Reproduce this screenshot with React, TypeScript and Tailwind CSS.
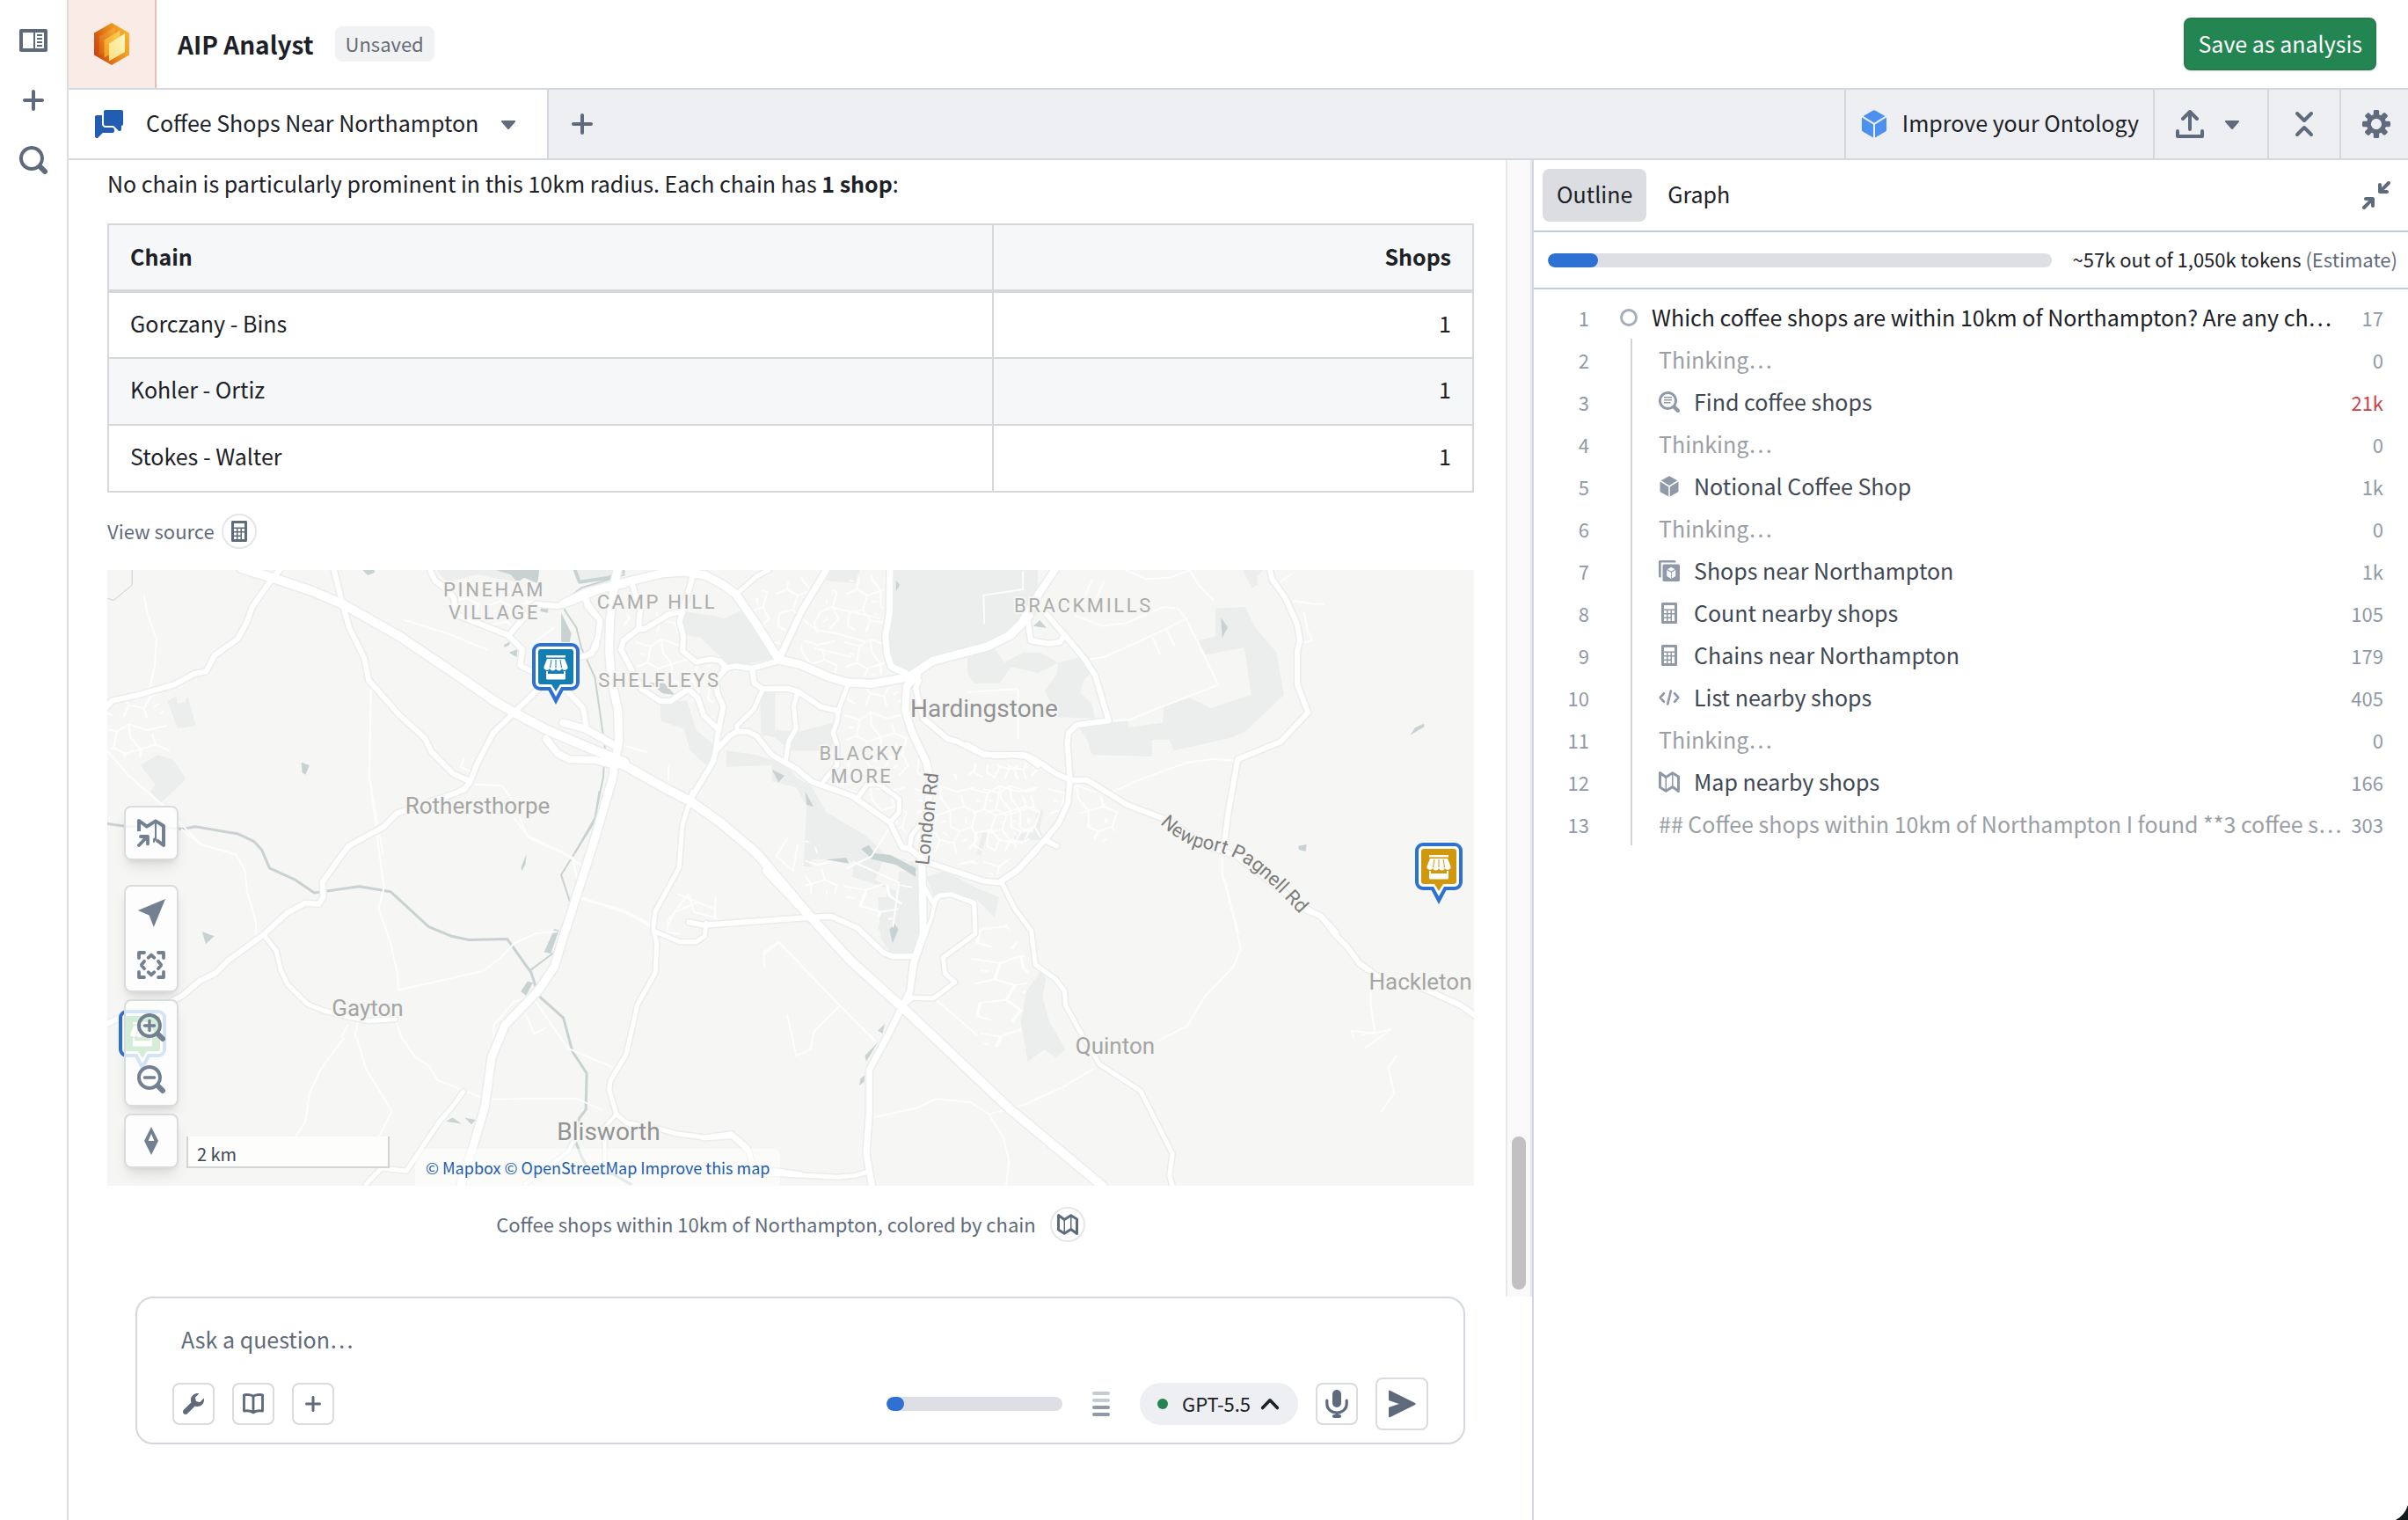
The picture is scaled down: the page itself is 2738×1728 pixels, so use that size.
import React from "react";

/* ---------- icons ---------- */

type IconProps = { className?: string };

function Svg({ className = "size-8", children }: IconProps & { children: React.ReactNode }) {
  return (
    <svg viewBox="0 0 16 16" className={className} fill="currentColor" aria-hidden="true">
      {children}
    </svg>
  );
}

const SEARCH =
  "M15.55 13.43l-2.67-2.68a6.94 6.94 0 001.11-3.76c0-3.87-3.13-7-7-7s-7 3.13-7 7 3.13 7 7 7c1.39 0 2.68-.42 3.76-1.11l2.68 2.67a1.498 1.498 0 102.12-2.12zm-8.56-1.44c-2.76 0-5-2.24-5-5s2.24-5 5-5 5 2.24 5 5-2.24 5-5 5z";

const line = { fill: "none", stroke: "currentColor", strokeLinecap: "round", strokeLinejoin: "round" } as const;

const PanelIcon = ({ className }: IconProps) => (
  <Svg className={className}>
    <path
      fillRule="evenodd"
      d="M1 1.5h14a1 1 0 011 1v11a1 1 0 01-1 1H1a1 1 0 01-1-1v-11a1 1 0 011-1zM2 3.5v9h6v-9zm7 0v9h5v-9z"
    />
    <path d="M10 4.5h3v1h-3zM10 6.5h3v1h-3zM10 8.5h3v1h-3zM10 10.5h3v1h-3z" />
  </Svg>
);
const PlusIcon = ({ className }: IconProps) => (
  <Svg className={className}>
    <path d="M13 7H9V3c0-.55-.45-1-1-1s-1 .45-1 1v4H3c-.55 0-1 .45-1 1s.45 1 1 1h4v4c0 .55.45 1 1 1s1-.45 1-1V9h4c.55 0 1-.45 1-1s-.45-1-1-1z" />
  </Svg>
);
const SearchIcon = ({ className }: IconProps) => (
  <Svg className={className}>
    <path d={SEARCH} />
  </Svg>
);
const ZoomInIcon = ({ className }: IconProps) => (
  <Svg className={className}>
    <path d={SEARCH} />
    <path {...line} strokeWidth="1.7" d="M7 4.2v5.6M4.2 7h5.6" />
  </Svg>
);
const ZoomOutIcon = ({ className }: IconProps) => (
  <Svg className={className}>
    <path d={SEARCH} />
    <path {...line} strokeWidth="1.7" d="M4.2 7h5.6" />
  </Svg>
);
const SearchTextIcon = ({ className }: IconProps) => (
  <Svg className={className}>
    <path d={SEARCH} />
    <path d="M4 4h6v1H4zM4 6h6v1H4zM4 8h5v1H4z" />
  </Svg>
);
const ChatIcon = ({ className }: IconProps) => (
  <Svg className={className}>
    <path d="M6 10c-1.1 0-2-.9-2-2V3H1c-.55 0-1 .45-1 1v11a1.003 1.003 0 001.71.71L4.41 13H10c.55 0 1-.45 1-1v-1.17L10.17 10H6zm9-10H6c-.55 0-1 .45-1 1v7c0 .55.45 1 1 1h4.59l2.7 2.71A1.003 1.003 0 0015 11V9c.55 0 1-.45 1-1V1c0-.55-.45-1-1-1z" />
  </Svg>
);
const CaretIcon = ({ className }: IconProps) => (
  <Svg className={className}>
    <path d="M12 6.5c0-.28-.22-.5-.5-.5h-7a.495.495 0 00-.37.83l3.5 4c.09.1.22.17.37.17s.28-.07.37-.17l3.5-4c.08-.09.13-.2.13-.33z" />
  </Svg>
);
const CubeIcon = ({ className }: IconProps) => (
  <Svg className={className}>
    <path d="M14.194 3.54L8 7.41 1.806 3.54 7.504.283a1 1 0 01.992 0zM14.944 4.25c.036.11.056.227.056.346v6.826a1 1 0 01-.504.868L8.5 15.714V8.277zM1.056 4.25L7.5 8.277v7.437l-5.996-3.426A1 1 0 011 11.42V4.596c0-.119.02-.236.056-.346z" />
  </Svg>
);
const ExportIcon = ({ className }: IconProps) => (
  <Svg className={className}>
    <path {...line} strokeWidth="2" d="M4 5l4-4 4 4M8 1.5V11M1 12v3h14v-3" />
  </Svg>
);
const CollapseIcon = ({ className }: IconProps) => (
  <Svg className={className}>
    <path {...line} strokeWidth="2" d="M4 2l4 4 4-4M4 14l4-4 4 4" />
  </Svg>
);
const CogIcon = ({ className }: IconProps) => (
  <Svg className={className}>
    <path d="M15.19 6.39h-1.85c-.11-.37-.27-.71-.45-1.04l1.36-1.36c.31-.31.31-.82 0-1.13l-1.13-1.13a.803.803 0 00-1.13 0l-1.36 1.36c-.33-.17-.67-.33-1.04-.44V.79c0-.44-.36-.8-.8-.8h-1.6c-.44 0-.8.36-.8.8v1.86c-.39.12-.75.28-1.1.47l-1.3-1.3c-.3-.3-.79-.3-1.09 0L1.82 2.91c-.3.3-.3.79 0 1.09l1.3 1.3c-.2.34-.36.7-.48 1.09H.79c-.44 0-.8.36-.8.8v1.6c0 .44.36.8.8.8h1.85c.11.37.27.71.45 1.04l-1.36 1.36c-.31.31-.31.82 0 1.13l1.13 1.13c.31.31.82.31 1.13 0l1.36-1.36c.33.18.67.33 1.04.44v1.86c0 .44.36.8.8.8h1.6c.44 0 .8-.36.8-.8v-1.86c.39-.12.75-.28 1.1-.47l1.3 1.3c.3.3.79.3 1.09 0l1.09-1.09c.3-.3.3-.79 0-1.09l-1.3-1.3c.19-.35.36-.71.48-1.1h1.85c.44 0 .8-.36.8-.8v-1.6a.816.816 0 00-.81-.79zm-7.2 4.6c-1.66 0-3-1.34-3-3s1.34-3 3-3 3 1.34 3 3-1.34 3-3 3z" />
  </Svg>
);
const MinimizeIcon = ({ className }: IconProps) => (
  <Svg className={className}>
    <path d="M15.99.99c0-.55-.45-1-1-1-.28 0-.53.11-.71.29l-3.29 3.29V1.99c0-.55-.45-1-1-1s-1 .45-1 1v4c0 .55.45 1 1 1h4c.55 0 1-.45 1-1s-.45-1-1-1h-1.59L15.7 1.7c.18-.18.29-.43.29-.71zM6 9H2c-.55 0-1 .45-1 1s.45 1 1 1h1.59L.29 14.28c-.18.18-.29.43-.29.71a1.003 1.003 0 001.71.71L5 12.41V14c0 .55.45 1 1 1s1-.45 1-1v-4c0-.55-.45-1-1-1z" />
  </Svg>
);
const CalculatorIcon = ({ className }: IconProps) => (
  <Svg className={className}>
    <path
      fillRule="evenodd"
      d="M3 0h10c.55 0 1 .45 1 1v14c0 .55-.45 1-1 1H3c-.55 0-1-.45-1-1V1c0-.55.45-1 1-1zm1 2v3h8V2zM4 6v2h2V6zm3 0v2h2V6zm3 0v2h2V6zM4 9v2h2V9zm3 0v2h2V9zm3 0v5h2V9zm-6 3v2h2v-2zm3 0v2h2v-2z"
    />
  </Svg>
);
const MapIcon = ({ className }: IconProps) => (
  <Svg className={className}>
    <path {...line} strokeWidth="2" d="M1 1l4.5 3.3L10.5 1.2 15 4v11l-4.5-3.3-5 3.1L1 12z" />
    <path {...line} strokeWidth="1" d="M5.5 4.5v10M10.5 1.5v10" />
  </Svg>
);
const MapResetIcon = ({ className }: IconProps) => (
  <Svg className={className}>
    <path {...line} strokeLinecap="butt" strokeWidth="2" d="M1 7V1l4.5 3.3L10.5 1.2 15 4v11l-4-3" />
    <path {...line} strokeWidth="1" d="M10.5 1.5V12M9.5 13v-1.5l1-.5" />
    <path {...line} strokeWidth="1.9" d="M1 15l4.6-4.8M2 10h4v4.2" />
  </Svg>
);
const GroupIcon = ({ className }: IconProps) => (
  <Svg className={className}>
    <path d="M0 1a1 1 0 011-1h11a1 1 0 011 1v.7H1.8V13H1a1 1 0 01-1-1z" />
    <path
      fillRule="evenodd"
      d="M4 3h11a1 1 0 011 1v11a1 1 0 01-1 1H4a1 1 0 01-1-1V4a1 1 0 011-1zm5.5 2.200L6.200 7v5l3.300 2 3.300-2V7z"
    />
    <path d="M9.300 9.200L6.200 7.400v-.9l3.300 1.900 3.300-1.900v.9L9.900 9.200v4.400h-.6z" />
  </Svg>
);
const CodeIcon = ({ className }: IconProps) => (
  <Svg className={className}>
    <path {...line} strokeWidth="1.8" d="M4 4.8L1.2 8 4 11.2M12 4.8L14.8 8 12 11.2M9.2 3L6.8 13" />
  </Svg>
);
const WrenchIcon = ({ className }: IconProps) => (
  <Svg className={className}>
    <path d="M15.83 3.7l-3.06 3.05-2.84-.7-.7-2.83L12.29.17a5.004 5.004 0 00-4.83 1.29 4.967 4.967 0 00-1.12 5.36L.58 12.58c-.36.36-.58.86-.58 1.41 0 1.1.9 2 2 2 .55 0 1.05-.22 1.41-.59l5.77-5.77c1.79.69 3.91.35 5.35-1.1a4.998 4.998 0 001.3-4.83z" />
  </Svg>
);
const ManualIcon = ({ className }: IconProps) => (
  <Svg className={className}>
    <path {...line} strokeWidth="1.9" d="M8 2.4C6.6 1 3 .8 1 1.2v12.2c2.2-.4 5.4-.2 7 1.3 1.6-1.5 4.8-1.7 7-1.3V1.2c-2-.4-5.6-.2-7 1.2zM8 2.6v12" />
  </Svg>
);
const ChevronUpIcon = ({ className }: IconProps) => (
  <Svg className={className}>
    <path {...line} strokeWidth="2.4" d="M2.4 11L8 5.2l5.6 5.8" />
  </Svg>
);
const MicIcon = ({ className }: IconProps) => (
  <Svg className={className}>
    <rect x="5.5" y="0" width="5" height="10" rx="2.5" />
    <path {...line} strokeWidth="1.6" d="M2.400 6v2c0 2.900 2.400 5 5.600 5s5.600-2.100 5.600-5V6M8 13v2" />
    <rect x="5.5" y="14" width="5" height="2" rx="1" />
  </Svg>
);
const SendIcon = ({ className }: IconProps) => (
  <Svg className={className}>
    <path strokeWidth="1" stroke="currentColor" strokeLinejoin="round" d="M1 .8L15.3 8 1 15.2v-4.800L8 8 1 5.6z" />
  </Svg>
);
const LocateIcon = ({ className }: IconProps) => (
  <Svg className={className}>
    <path d="M16 0L.4 6.5l6.4 2.800L9.4 16z" />
  </Svg>
);
const FitIcon = ({ className }: IconProps) => (
  <Svg className={className}>
    <path {...line} strokeWidth="1.9" d="M1 4V1h3M12 1h3v3M15 12v3h-3M4 15H1v-3M6.3 3.9L8 2.3l1.7 1.6M6.3 12.1L8 13.7l1.7-1.6M4 5.900L2.4 8 4 10.1M12 5.9L13.6 8 12 10.1" />
  </Svg>
);
const CompassIcon = ({ className }: IconProps) => (
  <Svg className={className}>
    <path fillRule="evenodd" d="M8 0l4 8-4 8-4-8zM8 4L6.3 8h3.4z" />
  </Svg>
);

const Logo = () => (
  <svg viewBox="0 0 40 48" className="h-12 w-10" aria-hidden="true">
    <defs>
      <linearGradient id="hex" x1="0" y1="0.7" x2="1" y2="0.3">
        <stop offset="0" stopColor="#c9430c" />
        <stop offset="0.55" stopColor="#e88a1c" />
        <stop offset="1" stopColor="#f6b531" />
      </linearGradient>
      <linearGradient id="l1" x1="0" y1="1" x2="1" y2="0">
        <stop offset="0" stopColor="#d9600f" />
        <stop offset="1" stopColor="#f6ae35" />
      </linearGradient>
      <linearGradient id="l2" x1="0" y1="1" x2="1" y2="0">
        <stop offset="0" stopColor="#f39a22" />
        <stop offset="1" stopColor="#fcd254" />
      </linearGradient>
      <linearGradient id="l3" x1="0" y1="1" x2="1" y2="0">
        <stop offset="0" stopColor="#fbdf7c" />
        <stop offset="1" stopColor="#fef6c4" />
      </linearGradient>
    </defs>
    <path d="M20 0l20 11.5v25L20 48 0 36.5v-25z" fill="url(#hex)" />
    <path d="M6 15.5L23.5 5v22L6 37z" fill="url(#l1)" />
    <path d="M11.5 19.5L29.5 8.5V29l-18 10.5z" fill="url(#l2)" />
    <path d="M17 23.5L35 12v21L17 43.5z" fill="url(#l3)" />
  </svg>
);

/* ---------- map ---------- */

/* Each sheet keeps its own survey grid; the transform places it in map units. */
const SHEETS = {
  nw: "translate(110 570) scale(0.3827 0.3333)",
  sw: "translate(110 900) scale(0.5102 0.3317)",
  ne: "translate(1100 640) scale(0.3827 0.3333)",
  mid: "translate(640 640) scale(0.3444 0.3333)",
  se: "translate(640 1000) scale(0.6633 0.3333)",
} as const;
type Sheet = keyof typeof SHEETS;
type Shape = [Sheet, string, number?];

const PARKS: Shape[] = [
  ["mid", "M395,165L500,180L530,190L605,155L705,325L560,355L500,300L455,255L398,245Z"],
  ["mid", "M1095,24L1568,24L1568,170L1480,240L1400,280L1220,330L1160,370L1085,350L1070,300L1085,170Z"],
  ["mid", "M320,470L410,470L440,570L510,630L480,695L420,640L400,565L325,540Z"],
  ["mid", "M540,640L640,655L735,690L775,735L820,760L870,850L1000,930L1080,1010L1170,1020L1175,1060L1130,1010L1060,1010L1030,1080L1100,1120L1080,1260L1040,1250L1075,1110L955,1070L960,1020L880,1010L820,1010L820,1035L795,1035L805,830L770,765L690,745L690,690L540,695Z"],
  ["mid", "M1110,1050L1180,1060L1180,1260L1090,1260Z"],
  ["mid", "M1200,1070L1260,1050L1370,1110L1440,1140L1425,1210L1370,1150L1300,1130L1225,1140Z"],
  ["mid", "M650,430L700,440L700,570L780,575L890,545L890,640L750,640L700,595L655,585Z"],
  ["mid", "M885,24L980,24L965,70L870,60Z"],
  ["ne", "M0,375L0,310L80,290L110,340L165,305L215,305L270,340L210,375L130,355L95,410L20,410Z"],
  ["ne", "M270,340L340,320L370,370L345,400L335,440L370,480L378,530L265,525L230,435L265,380Z"],
  ["ne", "M330,560L475,535L480,560L580,545L585,490L660,460L725,495L843,450L823,288L708,313L687,265L737,250L737,155L825,150L855,220L918,305L940,450L825,575L780,597L613,640L600,603L548,603L548,660L370,655L355,600Z"],
  ["ne", "M818,24L880,24L860,45L862,75L845,85Z"],
  ["ne", "M140,920L195,920L205,855L225,840L215,910L230,945L140,945Z"],
  ["ne", "M45,920L60,920L40,1000L28,990Z"],
  ["se", "M820,310L828,340L822,400L835,490L862,580L845,605L825,580L797,620L785,480L795,380Z"],
  ["se", "M540,60L612,60L612,180L600,255L562,255L545,200Z"],
  ["nw", "M210,680L235,665L240,690L262,685L270,665L295,765L240,775Z"],
  ["nw", "M130,900L180,865L225,880L265,945L190,1030L160,990L175,965Z"],
  ["nw", "M1010,234L1220,234L1250,275L1130,250L1040,275Z"],
  ["nw", "M1420,234L1535,234L1540,260L1440,270Z"],
];

const WATER: Shape[] = [
  ["nw", "M1185,234L1315,234L1310,280L1270,260L1250,275L1230,250Z"],
  ["nw", "M790,234L825,234L825,243L805,252Z"],
  ["nw", "M608,890L632,900L620,932L610,925Z"],
  ["nw", "M1210,490L1232,475L1225,490L1212,498Z"],
  ["nw", "M1225,515L1250,505L1248,532Z"],
  ["nw", "M1380,380L1410,450L1405,480L1380,480Z"],
  ["nw", "M1320,360L1342,365L1340,380L1318,375Z"],
  ["sw", "M235,480L262,495L243,522Z"],
  ["sw", "M958,213L955,250L947,272L946,258Z"],
  ["sw", "M1020,470L1030,475L1012,555L997,550Z"],
  ["sw", "M960,650L972,655L957,698L945,685Z"],
  ["sw", "M793,1117L813,1138L778,1130Z"],
  ["sw", "M820,1117L845,1125L835,1140Z"],
  ["mid", "M285,408L335,410L370,450L330,445Z"],
  ["mid", "M690,705L732,725L712,748Z"],
  ["mid", "M800,780L828,832L805,825Z"],
  ["mid", "M985,975L1010,962L1030,990L1080,995L1165,1040L1165,1070L1100,1030L1020,1010Z"],
  ["mid", "M868,1012L935,1005L945,1025Z"],
  ["mid", "M1100,60L1112,75L1100,97Z"],
  ["se", "M568,148L575,170L565,218L560,170Z"],
  ["se", "M552,492L548,525L540,515Z"],
  ["se", "M540,555L520,620L518,600Z"],
  ["se", "M518,665L516,690L508,703L510,680Z"],
  ["ne", "M753,187L774,220L757,255Z"],
  ["ne", "M1315,588L1330,562L1355,548L1358,558Z"],
  ["ne", "M983,965L1008,960L1005,983L985,978Z"],
  ["ne", "M196,215L215,195L235,222Z"],
];

const STREAMS: Shape[] = [
  ["sw", "M24,110L70,120L130,118L190,128L220,120L315,145L350,170L368,200L385,262L440,300L485,347L585,325L655,343L740,463L790,495L830,508L915,505L968,620L985,700L1040,775L1060,890L1092,965L1090,1090L1075,1120L1065,1190L1080,1250L1100,1305L1150,1310L1190,1345", 3],
  ["sw", "M1120,0L1110,100L1035,285L1055,380L1020,550L968,610", 2],
  ["nw", "M1568,250L1440,295L1395,335L1390,370L1425,430L1440,500L1480,600L1510,840L1505,940L1480,1080L1420,1200", 2],
  ["nw", "M105,234L105,285L50,338L31,330", 1],
  ["mid", "M40,24L55,65L150,50L200,30", 4],
];

const BLOCKS: Shape[] = [
  ["mid", "M940,430L1120,420L1200,700L1180,960L1080,880L980,790L860,740L900,690Z"],
  ["mid", "M1220,740L1400,690L1560,680L1560,900L1430,1070L1220,1000Z"],
  ["mid", "M200,170L380,170L390,320L500,350L500,540L380,430L250,420L200,280Z"],
  ["mid", "M560,120L850,30L720,300L620,180Z"],
  ["mid", "M900,70L1060,30L1060,380L940,390L760,330Z"],
  ["mid", "M800,940L940,1060L930,1130L800,1130Z"],
  ["nw", "M31,700L180,650L235,850L100,880L40,850Z"],
  ["nw", "M1070,320L1300,340L1220,440L1070,385Z"],
  ["se", "M720,100L760,150L800,290L780,590L720,560L700,400L680,350Z"],
  ["se", "M480,10L600,20L560,150L480,60Z"],
  ["ne", "M0,680L290,700L290,860L230,930L0,1040Z"],
  ["ne", "M310,745L480,830L400,990L340,870Z"],
];

const LANES: Shape[] = [
  ["nw", "M140,320L150,380L178,470L172,560L155,650M815,600L810,940L850,1200M915,405L1040,450L1160,505M1125,965L1205,970L1230,1010L1280,1140L1390,1200M31,850L90,930L200,1040L310,1170L400,1200M1360,430L1300,480M1090,880L1080,905L1110,920"],
  ["sw", "M190,130L230,180L310,215L330,270L335,340L355,450L355,500M612,0L640,330L628,400L655,520L670,620L672,680L860,615L900,570L930,520L980,485L1025,480M930,90L965,160L1060,225L1080,365L1180,410L1240,460M665,780L680,845L710,910L740,940L760,990L870,1055L960,1052L1070,1052L1125,1090M550,845L500,950L475,1030L465,1130L440,1190M580,845L600,950L658,1095L630,1180M885,850L885,800L930,720L970,700L1050,880L1150,945M1490,600L1485,550L1520,515L1568,590M545,840L560,800M575,840L582,790M955,760L975,830L1000,810"],
  ["se", "M345,295L345,255L370,215L475,430L535,550M475,430L430,520L425,580L400,600L385,465M535,810L605,780L640,748L700,760L730,800L755,880L765,960L760,1040M730,800L790,768L860,705L910,645M1135,0L1162,235L1150,295L1100,400L1070,500L1020,550M1385,345L1385,430L1392,520L1370,530M1355,535L1352,515L1390,525L1420,510L1375,575M1430,600L1415,640L1425,730L1403,790M640,410L710,530M30,65L110,110L155,160M180,140L215,50L225,110L260,130L262,60M180,145L178,180L200,185"],
  ["ne", "M430,782L510,740L655,680L730,668L800,675M365,328L410,320L590,225L650,190L745,415L590,485L480,535L425,540M650,190L625,155L585,150L560,160L470,205L400,215L320,180M470,24L530,55L600,50L660,24L690,80L730,125M757,1000L757,1060L780,1160L805,1260M50,205L48,110L165,90L165,30M0,440L150,430L150,600M590,225L615,280M550,255L572,310M370,60L350,110M405,65L385,115M910,80L960,40M970,130L1030,140L1060,140M1000,170L1010,230L1025,265L1000,270"],
  ["mid", "M790,190L840,230L905,240L1000,270M830,290L950,320M880,150L1010,180L1045,190M740,940L705,1000L760,1050L775,960M380,1130L430,1150L500,1180L505,1215M440,1160L370,1190L345,1240M940,1040L1020,1000L1080,900M1090,1240L1110,1090L960,1020M0,990L60,1030M60,1140L210,1195L290,1240M350,690L348,740M210,625L275,645"],
];

const ROADS: Shape[] = [
  ["nw", "M545,232L520,265L462,360L445,415L418,470L350,525L325,580L290,588L230,625L125,660L45,680L31,700", 5],
  ["nw", "M705,234L733,362L750,430L795,535L808,610L900,730L975,808L995,855L1060,930L1110,955", 5],
  ["nw", "M1330,620L1238,722L1178,790L1130,895L1110,955L1090,985", 5],
  ["nw", "M990,234L1005,270L1040,300L1062,330L1065,385L1220,455L1265,505L1258,560L1330,600L1400,650L1445,705L1455,775L1550,840", 5],
  ["nw", "M1225,455L1305,350L1370,357L1420,340L1500,300L1568,285", 5],
  ["nw", "M1450,320L1460,350L1495,405L1490,460L1470,520L1440,530", 5],
  ["nw", "M1385,755L1450,775L1550,840M1335,810L1370,860L1405,880L1480,882L1540,900", 7],
  ["sw", "M820,-10L800,5L668,75L640,120L562,185L540,230L503,310L505,360L495,385L465,382L425,415L372,490L292,580L265,622L230,648L190,700L140,740L45,780L24,795", 5],
  ["sw", "M372,490L400,545L410,610L425,660L470,728L505,750L570,775L605,785L665,780", 4],
  ["sw", "M817,1028L790,1085L765,1128L690,1300L635,1290L600,1345", 4],
  ["sw", "M1328,0L1305,115L1298,260L1245,410L1240,470L1248,520L1245,620L1205,730L1180,900L1145,990L1142,1020L1158,1105L1180,1135L1260,1158L1290,1172L1355,1185L1415,1172L1450,1220L1465,1290L1568,1310", 4],
  ["sw", "M1245,480L1300,515L1335,515L1355,495L1358,450", 4],
  ["sw", "M1158,1105L1132,1150L1132,1260M1065,1190L1050,1235L955,1345", 3],
  ["mid", "M0,140L80,100L190,70L330,35L400,30L470,42L530,75L570,105L640,210L710,325", 8],
  ["mid", "M870,24L790,160L715,325", 6],
  ["mid", "M1080,24L1078,170L1065,250L1070,310L1085,355L1130,375", 6],
  ["mid", "M530,360L570,352L625,360L710,335M625,360L632,410L660,430L740,428L775,438L850,490L910,505", 5],
  ["mid", "M430,40L400,150L385,200L398,250L395,300L440,338L490,328L520,335L540,358L505,400L510,445L530,490L512,580L505,640L495,680L425,800", 5],
  ["mid", "M230,75L255,160L250,225L270,225L350,175L395,165M250,225L200,265L192,295L260,430L320,470L355,472L415,430L445,460L465,520L515,570", 5],
  ["mid", "M70,110L80,150L125,200L110,290L75,318", 4],
  ["mid", "M505,640L550,590L575,575L610,575L640,590L690,655L775,705L820,745L955,795L1080,885L1120,970L1145,975L1200,1020L1390,1085L1440,1090L1500,1050L1568,975", 5],
  ["mid", "M660,430L630,500L575,555L575,575M775,440L762,490L770,565L745,610L735,680M940,420L910,500L905,540L892,580L905,620L905,690L860,745M975,800L1005,755L1045,755L1110,805L1110,850L1080,885M1145,975L1150,930L1180,890", 4],
  ["mid", "M680,24L640,45L580,100", 4],
  ["mid", "M1175,400L1165,430L1190,530L1270,600L1300,608L1390,655L1490,655L1530,660L1568,690", 5],
  ["ne", "M0,620L45,650L85,658L140,655L170,655L200,670L265,720L305,740L355,740L475,825L600,880L700,960L800,1000L1000,1175L1050,1205L1095,1260", 5],
  ["ne", "M305,740L297,620L300,580L325,552L420,538L380,385L350,330L288,245L235,175M288,245L275,270L240,275L188,265L180,200M305,740L298,820L270,890L230,945L150,1045L100,1085M230,945L265,965", 5],
  ["ne", "M898,20L905,55L945,120L980,210L988,265L980,300L980,415L1012,510L930,610L803,670L775,850L763,960", 5],
  ["se", "M751,5L775,100L803,175L810,290L845,340L860,380L862,430L890,530L920,630L990,720L1045,935L1040,1010L1045,1045", 4],
  ["se", "M1270,100L1300,125L1325,190L1345,230L1365,285L1400,335L1480,375L1540,430L1568,470", 5],
  ["se", "M618,20L635,80L645,55L665,50L705,80L707,185L652,265L655,320L672,350L635,405L600,402L580,432", 4],
  ["se", "M640,60L632,130L605,280L595,400", 3],
  ["se", "M216,145L240,155L426,128L460,125L505,165L550,250L565,262L600,262", 5],
  ["se", "M240,882L290,875L320,930L325,1000L430,1010L470,1015L500,1010L525,995", 4],
  ["mid", "M180,24L170,75L155,200L153,300L160,400L182,500L185,610L170,690L165,730L100,960L10,1250", 8],
  ["sw", "M1045,472L1020,600L985,680L910,800L880,910L865,1080L838,1220L812,1345", 8],
  ["mid", "M710,330L780,345L880,390L940,408L1020,412L1140,390L1220,335L1400,285L1480,245L1540,180", 8],
  ["ne", "M0,305L60,285L120,250L160,205L215,100L262,20", 7],
  ["mid", "M1170,385L1135,420L1130,500L1150,570L1200,680L1212,740L1200,900L1185,1000L1190,1260", 7],
  ["se", "M616,60L618,180L600,290L595,380L580,440L560,520L525,650L525,800L520,935L530,1045", 6],
  ["nw", "M430,228L525,262L640,306L730,350L900,460L1080,600L1180,680L1240,720L1330,775L1440,830L1568,890", 9],
  ["mid", "M140,665L203,690L340,770L420,812L520,885L640,990L820,1210", 9],
  ["se", "M350,-30L426,130L495,280L580,432L765,780L925,1045", 9],
];

function Shapes({ items, fill }: { items: Shape[]; fill: string }) {
  return (
    <g fill={fill}>
      {items.map(([sheet, d], i) => (
        <path key={i} d={d} transform={SHEETS[sheet]} />
      ))}
    </g>
  );
}

function Lines({ items, stroke, extra = 0 }: { items: Shape[]; stroke: string; extra?: number }) {
  return (
    <g fill="none" stroke={stroke} strokeLinecap="round" strokeLinejoin="round">
      {items.map(([sheet, d, w = 2], i) => (
        <path key={i} d={d} transform={SHEETS[sheet]} strokeWidth={w + extra} vectorEffect="non-scaling-stroke" />
      ))}
    </g>
  );
}

function Marker({ x, y, color }: { x: number; y: number; color: string }) {
  return (
    <g transform={`translate(${x} ${y})`}>
      <path
        d="M9 0h36a9 9 0 019 9v36a9 9 0 01-9 9h-9.5L27 70l-8.5-16H9a9 9 0 01-9-9V9a9 9 0 019-9z"
        fill="#2d72d2"
      />
      <path d="M9 4h36a5 5 0 015 5v36a5 5 0 01-5 5H33l-6 11-6-11H9a5 5 0 01-5-5V9a5 5 0 015-5z" fill="#fff" />
      <path d="M10 7h34a3 3 0 013 3v34a3 3 0 01-3 3H32l-5 8-5-8H10a3 3 0 01-3-3V10a3 3 0 013-3z" fill={color} />
      <g fill="#fff">
        <path d="M16 14h22v2.5H16zM17 18h20l3.500 9a3.3 3.3 0 01-6.6 1 3.3 3.3 0 01-6.900 0 3.3 3.3 0 01-6.900 0 3.3 3.3 0 01-6.6-1z" />
        <path d="M16 32h2v5h18v-5h2v8a1.5 1.5 0 01-1.5 1.5h-19A1.5 1.5 0 0116 40z" />
        <path d="M17 35h20v6H17z" />
      </g>
      <path d="M22 19l-1.5 9M27 19v9M32 19l1.5 9" stroke={color} strokeWidth="1" />
    </g>
  );
}

const SUBURBS: [number, number, string][] = [
  [562, 678, "PINEHAM"],
  [562, 704, "VILLAGE"],
  [747, 692, "CAMP HILL"],
  [750, 781, "SHELFLEYS"],
  [1232, 696, "BRACKMILLS"],
  [980, 864, "BLACKY"],
  [980, 890, "MORE"],
];
const VILLAGES: [number, number, string][] = [
  [543, 925, "Rothersthorpe"],
  [418, 1155, "Gayton"],
  [1268, 1198, "Quinton"],
  [1615, 1125, "Hackleton"],
];
const TOWNS: [number, number, string][] = [
  [1119, 815, "Hardingstone"],
  [692, 1296, "Blisworth"],
];

function Terrain() {
  return (
    <svg
      viewBox="122 648 1554 700"
      preserveAspectRatio="xMidYMid slice"
      className="h-full w-full bg-[#f6f6f4] font-[Roboto,sans-serif]"
      role="img"
      aria-label="Map of coffee shops around Northampton"
    >
      <defs>
        <pattern id="streets" width="230" height="250" patternUnits="userSpaceOnUse">
          <path
            d="M10 20L60 35L95 10L150 30L210 15M60 35L50 90L15 105M50 90L85 110L130 95M95 10L100 55L130 95L175 80L215 100M175 80L165 45M215 100L200 150L160 165L130 150L130 95M85 110L70 160L25 170M70 160L95 195L140 205L160 165M95 195L80 235M140 205L150 240M200 150L220 190L190 225M25 170L20 215L45 230M25 60L40 62M115 130L98 135M180 118L182 140M105 170L120 178M185 190L170 200"
            fill="none"
            stroke="#ffffff"
            strokeWidth="5"
            strokeLinejoin="round"
          />
        </pattern>
        <path id="london" d="M1056 984L1067 880" />
        <path id="newport" d="M1319 936Q1338 956 1364 964Q1398 968 1425 988Q1452 1010 1484 1046" />
      </defs>
      <Shapes items={PARKS} fill="#ebeeed" />
      <Shapes items={BLOCKS} fill="url(#streets)" />
      <Shapes items={WATER} fill="#c9d2d3" />
      <Lines items={STREAMS} stroke="#c9d2d3" />
      <Lines items={LANES} stroke="#fdfdfd" />
      <Lines items={ROADS} stroke="#e9edeb" extra={4} />
      <Lines items={ROADS} stroke="#ffffff" extra={1} />
      <g stroke="#f6f6f4" strokeWidth="4" strokeLinejoin="round" textAnchor="middle" className="[paint-order:stroke]">
        <g fill="#adadad" className="text-[22px] tracking-[0.12em]">
          {SUBURBS.map(([x, y, t]) => (
            <text key={t} x={x} y={y}>
              {t}
            </text>
          ))}
        </g>
        <g fill="#a5a5a5" className="text-[26px]">
          {VILLAGES.map(([x, y, t]) => (
            <text key={t} x={x} y={y}>
              {t}
            </text>
          ))}
        </g>
        <g fill="#939393" className="text-[28px]">
          {TOWNS.map(([x, y, t]) => (
            <text key={t} x={x} y={y}>
              {t}
            </text>
          ))}
        </g>
        <g fill="#7d7d7d" textAnchor="start" className="text-[22px]">
          <text>
            <textPath href="#london">London Rd</textPath>
          </text>
          <text>
            <textPath href="#newport">Newport Pagnell Rd</textPath>
          </text>
        </g>
      </g>
      <Marker x={605} y={731} color="#147eb3" />
      <Marker x={1609} y={958} color="#d1980b" />
      <Marker x={135} y={1148} color="#29a634" />
    </svg>
  );
}

const controlGroup =
  "flex w-[62px] flex-col overflow-hidden rounded-lg border-2 border-[#d9dbdc] bg-white/80 text-[#738091] shadow-lg";
const controlButton = "flex h-[58px] items-center justify-center";

function MapView() {
  return (
    <div className="relative mt-6 h-[700px] overflow-hidden">
      <Terrain />
      <div className="absolute bottom-5 left-[19px] flex flex-col gap-2">
        <div className={controlGroup + " mb-5"}>
          <button className={controlButton} aria-label="Reset map">
            <MapResetIcon />
          </button>
        </div>
        <div className={controlGroup}>
          <button className="flex h-[60px] items-center justify-center" aria-label="Locate">
            <LocateIcon />
          </button>
          <button className={controlButton} aria-label="Zoom to fit">
            <FitIcon />
          </button>
        </div>
        <div className={controlGroup}>
          <button className="flex h-[60px] items-center justify-center" aria-label="Zoom in">
            <ZoomInIcon />
          </button>
          <button className={controlButton} aria-label="Zoom out">
            <ZoomOutIcon />
          </button>
        </div>
        <div className={controlGroup}>
          <button className={controlButton} aria-label="Reset north">
            <CompassIcon />
          </button>
        </div>
      </div>
      <div className="absolute bottom-5 left-[90px] flex h-9 w-[231px] items-end border-2 border-t-0 border-[#d3d4d5] bg-white/75 px-2.5 text-[20px] leading-7 text-[#404854]">
        2 km
      </div>
      <div className="absolute bottom-0 left-[350px] flex h-[42px] items-center gap-1 rounded-t-lg bg-white/50 px-3 text-[18px] whitespace-nowrap text-[#215db0]">
        <a href="#mapbox">© Mapbox</a>
        <a href="#osm">© OpenStreetMap</a>
        <a href="#improve">Improve this map</a>
      </div>
    </div>
  );
}

/* ---------- conversation ---------- */

const CHAINS = [
  { name: "Gorczany - Bins", shops: 1 },
  { name: "Kohler - Ortiz", shops: 1 },
  { name: "Stokes - Walter", shops: 1 },
];

const sourceButton =
  "flex size-10 items-center justify-center rounded-full border-2 border-[#e5e6e8] text-[#5f6b7c]";
const squareButton =
  "flex size-12 items-center justify-center rounded-lg border-2 border-[#d9dbe0] text-[#5f6b7c]";

function Answer() {
  return (
    <div className="min-w-0 flex-1 pr-9 pl-11">
      <p className="pt-1.5 pb-6.5 text-[25px] leading-10">
        No chain is particularly prominent in this 10km radius. Each chain has <b>1 shop</b>:
      </p>
      <table className="w-full table-fixed border-collapse border-2 border-[#d5d7da] text-[25px]">
        <thead>
          <tr className="h-[76px] border-b-4 border-[#d5d7da] bg-[#f6f7f9]">
            <th className="w-[64.8%] border-r-2 border-[#d5d7da] px-6 pb-0.5 text-left font-bold">Chain</th>
            <th className="px-6 pb-0.5 text-right font-bold">Shops</th>
          </tr>
        </thead>
        <tbody>
          {CHAINS.map((c) => (
            <tr key={c.name} className="h-[76px] border-t-2 border-[#d5d7da] even:bg-[#f6f7f9]">
              <td className="border-r-2 border-[#d5d7da] px-6 pb-1">{c.name}</td>
              <td className="px-6 pb-1 text-right">{c.shops}</td>
            </tr>
          ))}
        </tbody>
      </table>
      <div className="mt-6 flex h-10 items-center gap-2 text-[22px] text-[#5f6b7c]">
        <span className="pb-0.5">View source</span>
        <button className={sourceButton} aria-label="View source calculation">
          <CalculatorIcon className="size-6" />
        </button>
      </div>
      <MapView />
      <div className="mt-6 flex h-10 items-center justify-center gap-4 text-[22px] text-[#5f6b7c]">
        <span className="pb-0.5">Coffee shops within 10km of Northampton, colored by chain</span>
        <button className={sourceButton} aria-label="View map source">
          <MapIcon className="size-6" />
        </button>
      </div>
    </div>
  );
}

function Composer() {
  return (
    <div className="px-[76px] pb-[86px]">
      <form className="flex h-[168px] flex-col justify-between rounded-[20px] border-2 border-[#d3d8de] pt-6 pr-10 pb-3.5 pl-10">
        <input
          aria-label="Ask a question"
          placeholder="Ask a question…"
          className="h-11 w-full bg-transparent px-2.5 text-[25px] outline-none placeholder:text-[#5f6b7c]"
        />
        <div className="flex items-center gap-5">
          <button type="button" className={squareButton} aria-label="Tools">
            <WrenchIcon className="size-6" />
          </button>
          <button type="button" className={squareButton} aria-label="Documentation">
            <ManualIcon className="size-6" />
          </button>
          <button type="button" className={squareButton} aria-label="Add">
            <PlusIcon className="size-6" />
          </button>
          <div className="ml-auto h-4 w-[200px] overflow-hidden rounded-full bg-[#dedfe4]">
            <div className="h-4 w-5 rounded-full bg-[#2d72d2]" />
          </div>
          <div className="mr-3.5 ml-3.5 flex w-5 flex-col gap-1">
            <span className="h-1 rounded-full bg-[#c5cbd3]" />
            <span className="h-1 rounded-full bg-[#c5cbd3]" />
            <span className="h-1 rounded-full bg-[#8f99a8]" />
            <span className="h-1 rounded-full bg-[#8f99a8]" />
          </div>
          <button
            type="button"
            aria-haspopup="menu"
            className="flex h-12 w-[180px] items-center rounded-full bg-[#eeeff3] px-5 text-[22px]"
          >
            <span className="size-3 rounded-full bg-[#238551]" />
            <span className="ml-4 pb-0.5">GPT-5.5</span>
            <ChevronUpIcon className="ml-auto size-6" />
          </button>
          <button type="button" className={squareButton} aria-label="Dictate">
            <MicIcon />
          </button>
          <button
            type="submit"
            aria-label="Send"
            className="flex size-[60px] items-center justify-center rounded-lg border-2 border-[#d9dbe0] text-[#5f6b7c]"
          >
            <SendIcon />
          </button>
        </div>
      </form>
    </div>
  );
}

/* ---------- outline ---------- */

type Step = { text: string; count: string; icon?: (p: IconProps) => React.JSX.Element; hot?: boolean };
const STEPS: Step[] = [
  { text: "Thinking…", count: "0" },
  { text: "Find coffee shops", count: "21k", icon: SearchTextIcon, hot: true },
  { text: "Thinking…", count: "0" },
  { text: "Notional Coffee Shop", count: "1k", icon: CubeIcon },
  { text: "Thinking…", count: "0" },
  { text: "Shops near Northampton", count: "1k", icon: GroupIcon },
  { text: "Count nearby shops", count: "105", icon: CalculatorIcon },
  { text: "Chains near Northampton", count: "179", icon: CalculatorIcon },
  { text: "List nearby shops", count: "405", icon: CodeIcon },
  { text: "Thinking…", count: "0" },
  { text: "Map nearby shops", count: "166", icon: MapIcon },
  { text: "## Coffee shops within 10km of Northampton I found **3 coffee s…", count: "303" },
];

function OutlinePanel() {
  return (
    <aside className="flex w-[996px] shrink-0 flex-col border-l-2 border-[#d3d8de]">
      <div className="flex h-[82px] items-center border-b-2 border-[#c5cbd3] pr-5 pl-2.5 text-[25px]">
        <div role="tablist" className="flex">
          <button role="tab" aria-selected="true" className="h-[60px] rounded-lg bg-[#dcdde0] px-4 pb-0.5">
            Outline
          </button>
          <button role="tab" aria-selected="false" className="h-[60px] px-6 pb-0.5">
            Graph
          </button>
        </div>
        <button className="ml-auto text-[#5f6b7c]" aria-label="Minimize panel">
          <MinimizeIcon />
        </button>
      </div>
      <div className="flex h-[65px] items-center gap-6 border-b-2 border-[#c5cbd3] pr-3 pl-4 text-[22px]">
        <div className="h-4 flex-1 overflow-hidden rounded-full bg-[#dedfe4]">
          <div className="h-4 w-[10%] rounded-full bg-[#2d72d2]" />
        </div>
        <div className="pb-0.5 whitespace-nowrap">
          ~57k out of 1,050k tokens <span className="text-[#5f6b7c]">(Estimate)</span>
        </div>
      </div>
      <ol className="pt-2 pr-7 text-[25px] whitespace-nowrap">
        <li className="flex h-12 items-center">
          <span className="w-[63px] text-right text-[22px] text-[#8f99a8]">1</span>
          <span className="ml-[35px] size-5 shrink-0 rounded-full border-3 border-[#a4adb9]" />
          <span className="ml-4">Which coffee shops are within 10km of Northampton? Are any ch…</span>
          <span className="flex-1 text-right text-[22px] text-[#8f99a8]">17</span>
        </li>
        {STEPS.map((s, i) => {
          const Icon = s.icon;
          return (
            <li key={i} className="flex h-12 items-center">
              <span className="w-[63px] shrink-0 text-right text-[22px] text-[#8f99a8]">{i + 2}</span>
              <span className="ml-[47px] h-12 w-0.5 shrink-0 bg-[#d3d5d8]" />
              <button className="ml-[30px] flex min-w-0 flex-1 items-center gap-4 text-left">
                {Icon && <Icon className="size-6 shrink-0 text-[#8f99a8]" />}
                <span className={Icon ? "text-[#404854]" : "text-[#9a9ea5]"}>{s.text}</span>
              </button>
              <span className={s.hot ? "text-[22px] text-[#cd4246]" : "text-[22px] text-[#8f99a8]"}>{s.count}</span>
            </li>
          );
        })}
      </ol>
    </aside>
  );
}

/* ---------- page ---------- */

export default function App() {
  return (
    <div className="relative flex h-screen overflow-hidden bg-white font-['Noto_Sans_CJK_SC',sans-serif] text-[#1c2127]">
      <nav className="flex w-[78px] shrink-0 flex-col items-center gap-9 border-r-2 border-[#dcdde0] pt-[30px] text-[#5f6b7c]">
        <button aria-label="Toggle sidebar">
          <PanelIcon />
        </button>
        <button aria-label="New">
          <PlusIcon />
        </button>
        <button aria-label="Search">
          <SearchIcon />
        </button>
      </nav>
      <div className="flex min-w-0 flex-1 flex-col">
        <header className="flex h-[102px] shrink-0 items-center border-b-2 border-[#d3d8e0] pr-9">
          <div className="flex w-[100px] items-center justify-center self-stretch border-r-2 border-[#edc0b1] bg-[#f9ece7]">
            <Logo />
          </div>
          <h1 className="ml-6 text-[28px] font-bold">AIP Analyst</h1>
          <span className="ml-6 flex h-10 items-center rounded-lg bg-[#f1f2f4] px-3 pb-0.5 text-[22px] text-[#666b73]">
            Unsaved
          </span>
          <button className="ml-auto flex h-[60px] items-center rounded-lg border-2 border-[#2a7a4f] bg-[#238551] px-3.5 text-[25px] text-white shadow-sm">
            Save as analysis
          </button>
        </header>
        <div className="flex h-20 shrink-0 border-b-2 border-[#d3d8de] bg-[#edeff3] text-[25px]">
          <button className="flex items-center border-r-2 border-[#d3d8de] bg-white pr-7 pl-[30px]">
            <ChatIcon className="size-8 text-[#215db0]" />
            <span className="ml-6.5 pb-0.5">Coffee Shops Near Northampton</span>
            <CaretIcon className="ml-4.5 size-8 text-[#5f6b7c]" />
          </button>
          <button className="flex w-[76px] items-center justify-center text-[#5f6b7c]" aria-label="New tab">
            <PlusIcon />
          </button>
          <button className="ml-auto flex items-center gap-4 border-l-2 border-[#d3d8de] px-4">
            <CubeIcon className="size-8 text-[#4c90f0]" />
            <span className="pb-0.5">Improve your Ontology</span>
          </button>
          <button
            className="flex w-[130px] items-center gap-4 border-l-2 border-[#d3d8de] pl-6 text-[#5f6b7c]"
            aria-label="Share"
          >
            <ExportIcon />
            <CaretIcon />
          </button>
          <button
            className="flex w-[82px] items-center justify-center border-l-2 border-[#d3d8de] text-[#5f6b7c]"
            aria-label="Collapse all"
          >
            <CollapseIcon />
          </button>
          <button
            className="flex w-[78px] items-center border-l-2 border-[#d3d8de] pl-6 text-[#5f6b7c]"
            aria-label="Settings"
          >
            <CogIcon />
          </button>
        </div>
        <div className="flex min-h-0 flex-1">
          <main className="flex min-w-0 flex-1 flex-col">
            <div className="flex min-h-0 flex-1 overflow-hidden">
              <Answer />
              <div className="flex w-[30px] shrink-0 flex-col items-center justify-end border-x-2 border-[#e8e8e8] bg-[#fafafa] pb-2">
                <div className="h-[174px] w-4 rounded-full bg-[#c1c1c1]" />
              </div>
            </div>
            <Composer />
          </main>
          <OutlinePanel />
        </div>
      </div>
      <svg viewBox="0 0 14 17" className="absolute right-0 bottom-0 h-[17px] w-3.5" aria-hidden="true">
        <path d="M14 0V17H0Q10 12 14 0z" fill="#10181a" />
      </svg>
    </div>
  );
}
